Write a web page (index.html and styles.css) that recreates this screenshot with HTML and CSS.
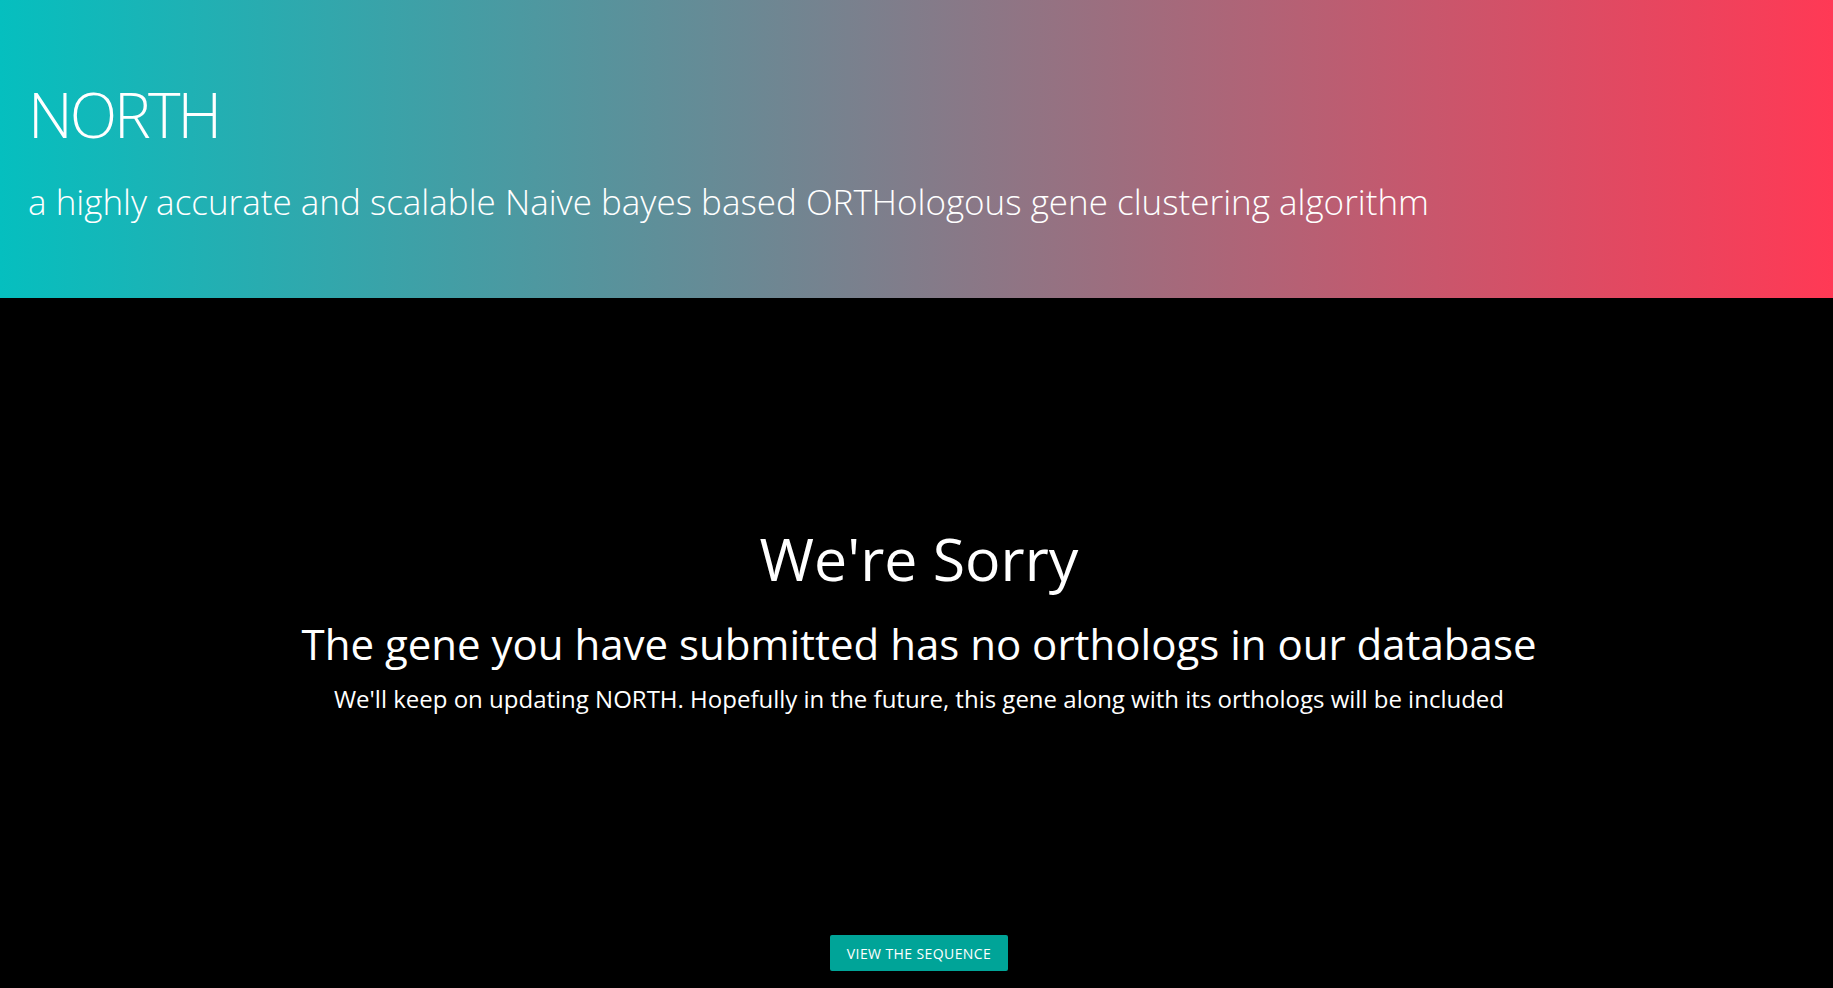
FILE: index.html
```html
<!DOCTYPE html>
<html lang="en">
<head>
<meta charset="utf-8">
<title>NORTH</title>
<link rel="stylesheet" href="styles.css">
</head>
<body>
<header class="hero">
  <h1 class="hero-title">NORTH</h1>
  <p class="hero-sub">a highly accurate and scalable Naive bayes based ORTHologous gene clustering algorithm</p>
</header>
<main class="content">
  <div class="message">
    <h2 class="sorry">We're Sorry</h2>
    <h3 class="reason">The gene you have submitted has no orthologs in our database</h3>
    <p class="note">We'll keep on updating NORTH. Hopefully in the future, this gene along with its orthologs will be included</p>
  </div>
  <a class="btn" href="#">VIEW THE SEQUENCE</a>
</main>
</body>
</html>
```
FILE: styles.css
```css
html, body {
  margin: 0;
  padding: 0;
  height: 100%;
  background: #000;
}
body {
  display: flex;
  flex-direction: column;
  overflow: hidden;
}
.hero {
  height: 298px;
  box-sizing: border-box;
  background: linear-gradient(to right, #05bfbf 0%, #ff3955 100%);
  color: #fff;
  padding: 76px 0 0 28px;
  font-family: "Open Sans", sans-serif;
  font-weight: 300;
}
.hero-title {
  margin: 0;
  font-size: 62px;
  font-weight: 300;
  line-height: 76px;
  letter-spacing: -3px;
}
.hero-sub {
  margin: 27px 0 0;
  font-size: 35px;
  line-height: 46px;
  font-weight: 300;
}
.content {
  flex: 1;
  display: flex;
  flex-direction: column;
  align-items: center;
  padding-left: 5px;
  color: #fff;
  font-family: "Open Sans", sans-serif;
  text-align: center;
}
.message {
  margin-top: 222px;
  display: flex;
  flex-direction: column;
  align-items: center;
}
.sorry {
  margin: 0;
  font-size: 59px;
  font-weight: 400;
  line-height: 76px;
}
.reason {
  margin: 20px 0 0;
  font-size: 42px;
  font-weight: 400;
  line-height: 56px;
}
.note {
  margin: 12px 0 0;
  font-size: 24px;
  line-height: 30px;
}
.btn {
  margin-top: 221px;
  width: 178px;
  height: 36px;
  box-sizing: border-box;
  display: flex;
  align-items: center;
  justify-content: center;
  background: #00a498;
  color: #fff;
  border-radius: 2px;
  text-decoration: none;
  font-size: 14px;
  letter-spacing: 0.4px;
}
```
